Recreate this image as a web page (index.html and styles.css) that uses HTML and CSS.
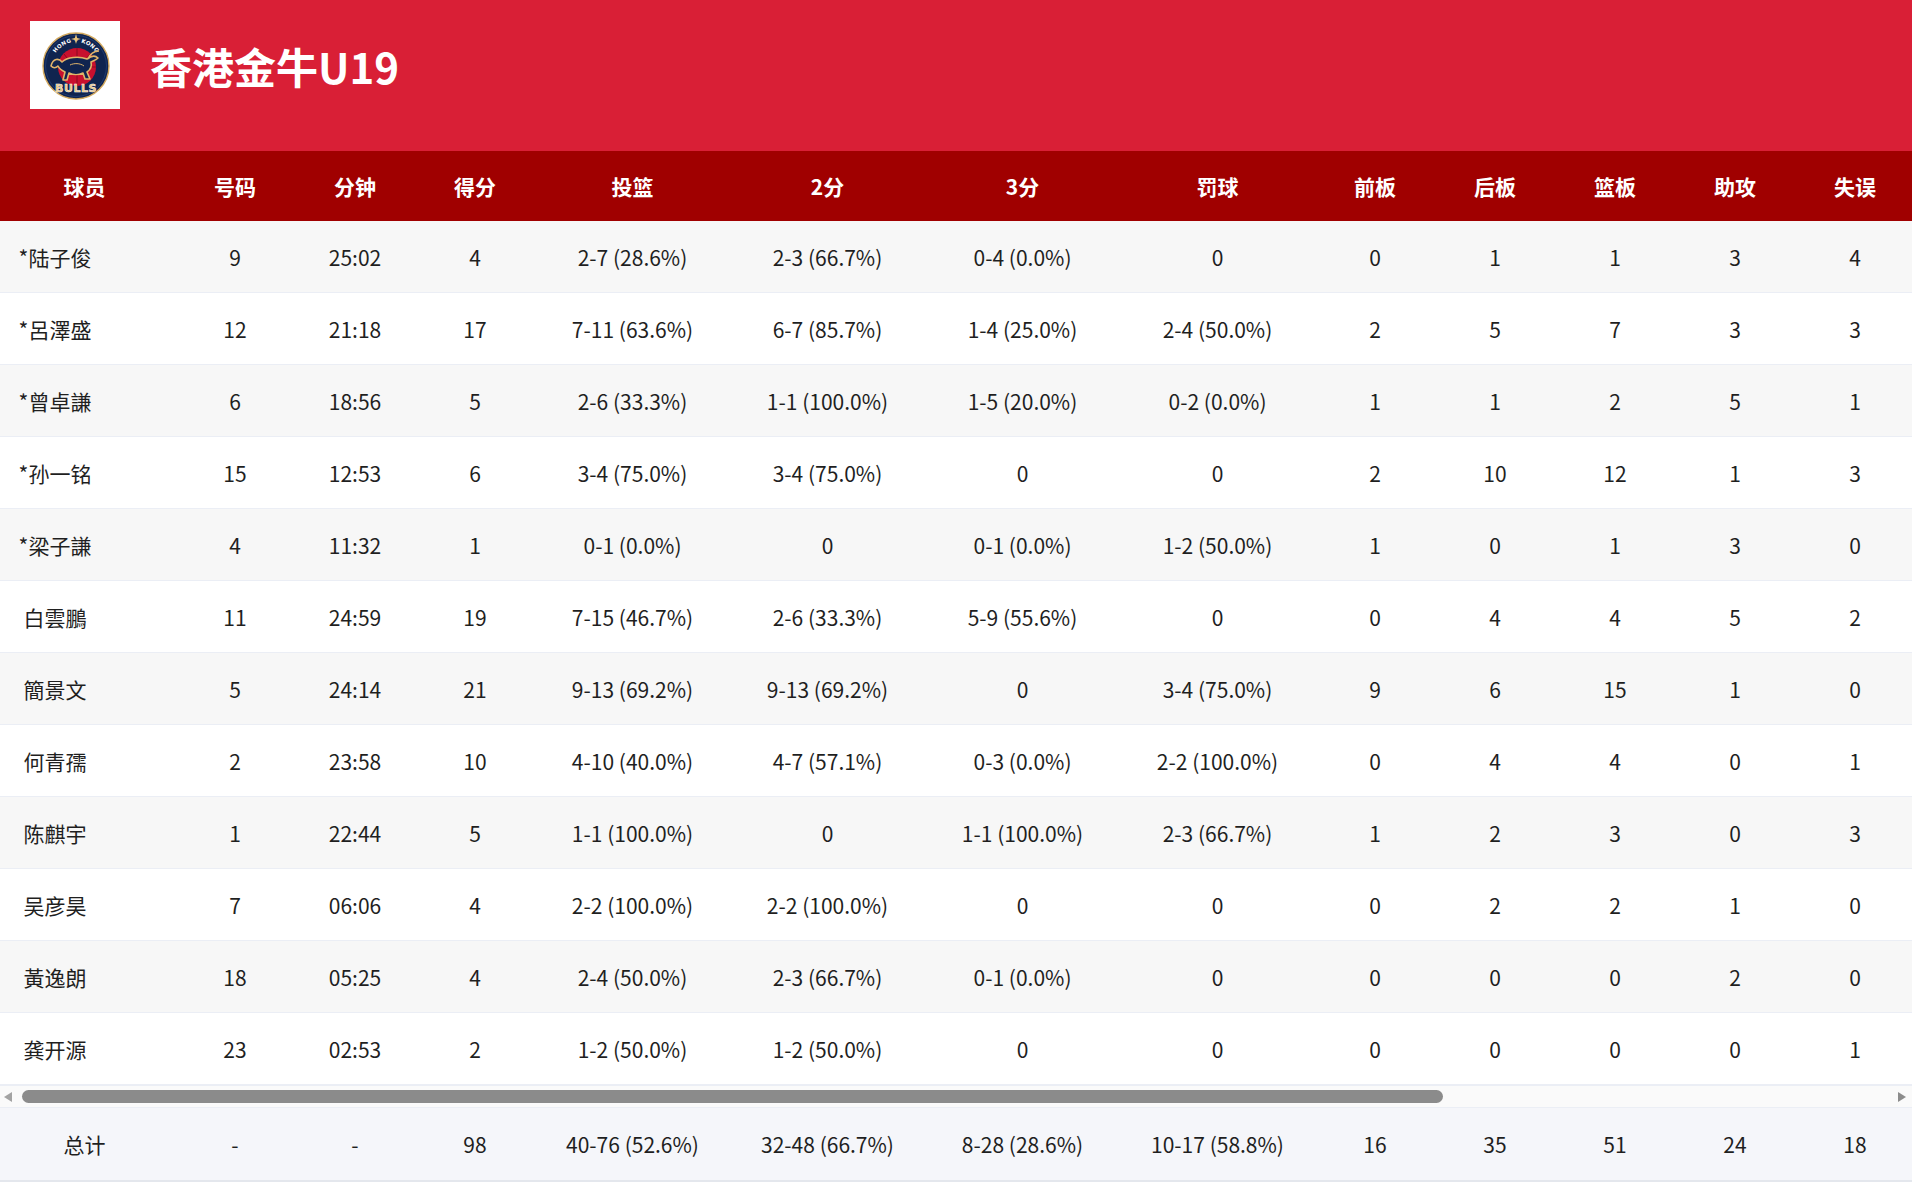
FILE: index.html
```html
<!DOCTYPE html>
<html lang="zh">
<head>
<meta charset="utf-8">
<title>香港金牛U19</title>
<link rel="stylesheet" href="styles.css">
</head>
<body>
<header class="team-bar">
  <div class="logo">
    <svg width="90" height="88" viewBox="0 0 90 88" xmlns="http://www.w3.org/2000/svg">
      <defs>
        <path id="arcTop" d="M22 45 A24 24 0 0 1 70 45"/>
      </defs>
      <circle cx="46" cy="45" r="33" fill="#10244f" stroke="#d3a95e" stroke-width="1.4"/>
      <circle cx="46" cy="45" r="30.5" fill="none" stroke="#1d3a70" stroke-width="1"/>
      <circle cx="47" cy="46" r="19" fill="#c8102e"/>
      <path d="M28 46 H66 M47 27 V65 M34 33 Q47 46 34 59 M60 33 Q47 46 60 59" stroke="#8a0a20" stroke-width="1" fill="none"/>
      <text class="logo-small"><textPath href="#arcTop" startOffset="50%" text-anchor="middle">HONG ✦ KONG</textPath></text>
      <path d="M46 13 L47.2 17 L51 18 L47.2 19 L46 23 L44.8 19 L41 18 L44.8 17 Z" fill="#e7c27a"/>
      <path d="M21 45 C23 37 29 37 32 41 C37 36 49 35 57 38 C61 35 65 34 68 37 C66 39 63 40 61 41 C62 45 60 49 57 51 L60 58 L55 58 L53 52 C49 54 43 54 39 52 L37 59 L33 59 L35 51 C31 49 29 47 28 45 C26 47 24 48 21 45 Z" fill="#10244f" stroke="#e0b46a" stroke-width="1.6" stroke-linejoin="round"/>
      <path d="M58 38 C60 33 64 30 69 30" stroke="#e0b46a" stroke-width="1.6" fill="none"/>
      <path d="M40 44 C44 42 50 42 54 45" stroke="#e0b46a" stroke-width="1" fill="none"/>
      <text class="logo-big" x="46" y="71" text-anchor="middle">BULLS</text>
    </svg>
  </div>
  <h1 class="team-name">香港金牛U19</h1>
</header>

<main class="stats">
  <div class="viewport">
    <div class="row head">
      <div class="cell c-name-h">球员</div>
      <div class="cell">号码</div>
      <div class="cell">分钟</div>
      <div class="cell">得分</div>
      <div class="cell">投篮</div>
      <div class="cell">2分</div>
      <div class="cell">3分</div>
      <div class="cell">罚球</div>
      <div class="cell">前板</div>
      <div class="cell">后板</div>
      <div class="cell">篮板</div>
      <div class="cell">助攻</div>
      <div class="cell">失误</div>
    </div>

    <div class="row line stripe">
      <div class="cell c-name">*陆子俊</div><div class="cell">9</div><div class="cell">25:02</div><div class="cell">4</div><div class="cell">2-7 (28.6%)</div><div class="cell">2-3 (66.7%)</div><div class="cell">0-4 (0.0%)</div><div class="cell">0</div><div class="cell">0</div><div class="cell">1</div><div class="cell">1</div><div class="cell">3</div><div class="cell">4</div>
    </div>
    <div class="row line">
      <div class="cell c-name">*呂澤盛</div><div class="cell">12</div><div class="cell">21:18</div><div class="cell">17</div><div class="cell">7-11 (63.6%)</div><div class="cell">6-7 (85.7%)</div><div class="cell">1-4 (25.0%)</div><div class="cell">2-4 (50.0%)</div><div class="cell">2</div><div class="cell">5</div><div class="cell">7</div><div class="cell">3</div><div class="cell">3</div>
    </div>
    <div class="row line stripe">
      <div class="cell c-name">*曾卓謙</div><div class="cell">6</div><div class="cell">18:56</div><div class="cell">5</div><div class="cell">2-6 (33.3%)</div><div class="cell">1-1 (100.0%)</div><div class="cell">1-5 (20.0%)</div><div class="cell">0-2 (0.0%)</div><div class="cell">1</div><div class="cell">1</div><div class="cell">2</div><div class="cell">5</div><div class="cell">1</div>
    </div>
    <div class="row line">
      <div class="cell c-name">*孙一铭</div><div class="cell">15</div><div class="cell">12:53</div><div class="cell">6</div><div class="cell">3-4 (75.0%)</div><div class="cell">3-4 (75.0%)</div><div class="cell">0</div><div class="cell">0</div><div class="cell">2</div><div class="cell">10</div><div class="cell">12</div><div class="cell">1</div><div class="cell">3</div>
    </div>
    <div class="row line stripe">
      <div class="cell c-name">*梁子謙</div><div class="cell">4</div><div class="cell">11:32</div><div class="cell">1</div><div class="cell">0-1 (0.0%)</div><div class="cell">0</div><div class="cell">0-1 (0.0%)</div><div class="cell">1-2 (50.0%)</div><div class="cell">1</div><div class="cell">0</div><div class="cell">1</div><div class="cell">3</div><div class="cell">0</div>
    </div>
    <div class="row line">
      <div class="cell c-name">白雲鵬</div><div class="cell">11</div><div class="cell">24:59</div><div class="cell">19</div><div class="cell">7-15 (46.7%)</div><div class="cell">2-6 (33.3%)</div><div class="cell">5-9 (55.6%)</div><div class="cell">0</div><div class="cell">0</div><div class="cell">4</div><div class="cell">4</div><div class="cell">5</div><div class="cell">2</div>
    </div>
    <div class="row line stripe">
      <div class="cell c-name">簡景文</div><div class="cell">5</div><div class="cell">24:14</div><div class="cell">21</div><div class="cell">9-13 (69.2%)</div><div class="cell">9-13 (69.2%)</div><div class="cell">0</div><div class="cell">3-4 (75.0%)</div><div class="cell">9</div><div class="cell">6</div><div class="cell">15</div><div class="cell">1</div><div class="cell">0</div>
    </div>
    <div class="row line">
      <div class="cell c-name">何青孺</div><div class="cell">2</div><div class="cell">23:58</div><div class="cell">10</div><div class="cell">4-10 (40.0%)</div><div class="cell">4-7 (57.1%)</div><div class="cell">0-3 (0.0%)</div><div class="cell">2-2 (100.0%)</div><div class="cell">0</div><div class="cell">4</div><div class="cell">4</div><div class="cell">0</div><div class="cell">1</div>
    </div>
    <div class="row line stripe">
      <div class="cell c-name">陈麒宇</div><div class="cell">1</div><div class="cell">22:44</div><div class="cell">5</div><div class="cell">1-1 (100.0%)</div><div class="cell">0</div><div class="cell">1-1 (100.0%)</div><div class="cell">2-3 (66.7%)</div><div class="cell">1</div><div class="cell">2</div><div class="cell">3</div><div class="cell">0</div><div class="cell">3</div>
    </div>
    <div class="row line">
      <div class="cell c-name">吴彦昊</div><div class="cell">7</div><div class="cell">06:06</div><div class="cell">4</div><div class="cell">2-2 (100.0%)</div><div class="cell">2-2 (100.0%)</div><div class="cell">0</div><div class="cell">0</div><div class="cell">0</div><div class="cell">2</div><div class="cell">2</div><div class="cell">1</div><div class="cell">0</div>
    </div>
    <div class="row line stripe">
      <div class="cell c-name">黃逸朗</div><div class="cell">18</div><div class="cell">05:25</div><div class="cell">4</div><div class="cell">2-4 (50.0%)</div><div class="cell">2-3 (66.7%)</div><div class="cell">0-1 (0.0%)</div><div class="cell">0</div><div class="cell">0</div><div class="cell">0</div><div class="cell">0</div><div class="cell">2</div><div class="cell">0</div>
    </div>
    <div class="row line">
      <div class="cell c-name">龚开源</div><div class="cell">23</div><div class="cell">02:53</div><div class="cell">2</div><div class="cell">1-2 (50.0%)</div><div class="cell">1-2 (50.0%)</div><div class="cell">0</div><div class="cell">0</div><div class="cell">0</div><div class="cell">0</div><div class="cell">0</div><div class="cell">0</div><div class="cell">1</div>
    </div>
  </div>

  <div class="hscroll">
    <span class="arrow arrow-left"></span>
    <div class="track"><div class="thumb"></div></div>
    <span class="arrow arrow-right"></span>
  </div>

  <div class="viewport">
    <div class="row foot">
      <div class="cell c-name-h">总计</div><div class="cell">-</div><div class="cell">-</div><div class="cell">98</div><div class="cell">40-76 (52.6%)</div><div class="cell">32-48 (66.7%)</div><div class="cell">8-28 (28.6%)</div><div class="cell">10-17 (58.8%)</div><div class="cell">16</div><div class="cell">35</div><div class="cell">51</div><div class="cell">24</div><div class="cell">18</div>
    </div>
  </div>
</main>
</body>
</html>
```

FILE: styles.css
```css
html, body {
  margin: 0;
  padding: 0;
}

body {
  width: 1912px;
  height: 1182px;
  overflow: hidden;
  background: #ffffff;
  color: #1f1f1f;
  font-family: "Noto Sans CJK SC", "Noto Sans", sans-serif;
}

.team-bar {
  box-sizing: border-box;
  height: 151px;
  background: #d91f36;
  display: flex;
  align-items: flex-start;
  gap: 30px;
  padding: 21px 0 0 30px;
}

.logo {
  width: 90px;
  height: 88px;
  background: #ffffff;
  flex: none;
}

.logo svg {
  display: block;
}

.logo-small {
  font-family: "DejaVu Sans", sans-serif;
  font-size: 5.5px;
  font-weight: 700;
  fill: #ffffff;
  letter-spacing: 0.3px;
}

.logo-big {
  font-family: "DejaVu Sans", sans-serif;
  font-size: 11px;
  font-weight: 700;
  fill: #e7bd6e;
  stroke: #ffffff;
  stroke-width: 0.5px;
  letter-spacing: 0.5px;
}

.team-name {
  margin: 0;
  color: #ffffff;
  font-size: 42px;
  font-weight: 700;
  line-height: 90px;
}

.stats {
  display: flex;
  flex-direction: column;
}

.viewport {
  width: 1912px;
  overflow: hidden;
}

.row {
  display: grid;
  grid-template-columns: 175px repeat(3, 120px) repeat(4, 195px) repeat(5, 120px);
  width: max-content;
  box-sizing: border-box;
}

.cell {
  display: flex;
  align-items: center;
  justify-content: center;
  white-space: nowrap;
}

.head {
  height: 70px;
  background: #a00000;
  color: #ffffff;
  font-size: 21px;
  font-weight: 700;
}

.line {
  height: 72px;
  border-bottom: 1px solid #ebeef5;
  background: #ffffff;
  font-size: 21px;
}

.line.stripe {
  background: #f7f7f7;
}

.c-name {
  padding-right: 65px;
}

.c-name-h {
  padding-right: 6px;
}

.hscroll {
  box-sizing: border-box;
  height: 23px;
  background: #fafafa;
  border-top: 1px solid #ebeef5;
  border-bottom: 1px solid #ebeef5;
  display: flex;
  align-items: center;
  padding: 0 6px 0 4px;
}

.arrow {
  width: 0;
  height: 0;
  border-top: 5px solid transparent;
  border-bottom: 5px solid transparent;
  flex: none;
}

.arrow-left {
  border-right: 8px solid #a3a3a3;
}

.arrow-right {
  border-left: 8px solid #8c8c8c;
}

.track {
  flex: 1;
  height: 13px;
  margin: 0 9px 0 10px;
}

.thumb {
  width: 1421px;
  height: 13px;
  border-radius: 7px;
  background: #8b8b8b;
}

.foot {
  height: 74px;
  background: #f5f6fa;
  border-bottom: 2px solid #e4e7ed;
  font-size: 21px;
}
```
